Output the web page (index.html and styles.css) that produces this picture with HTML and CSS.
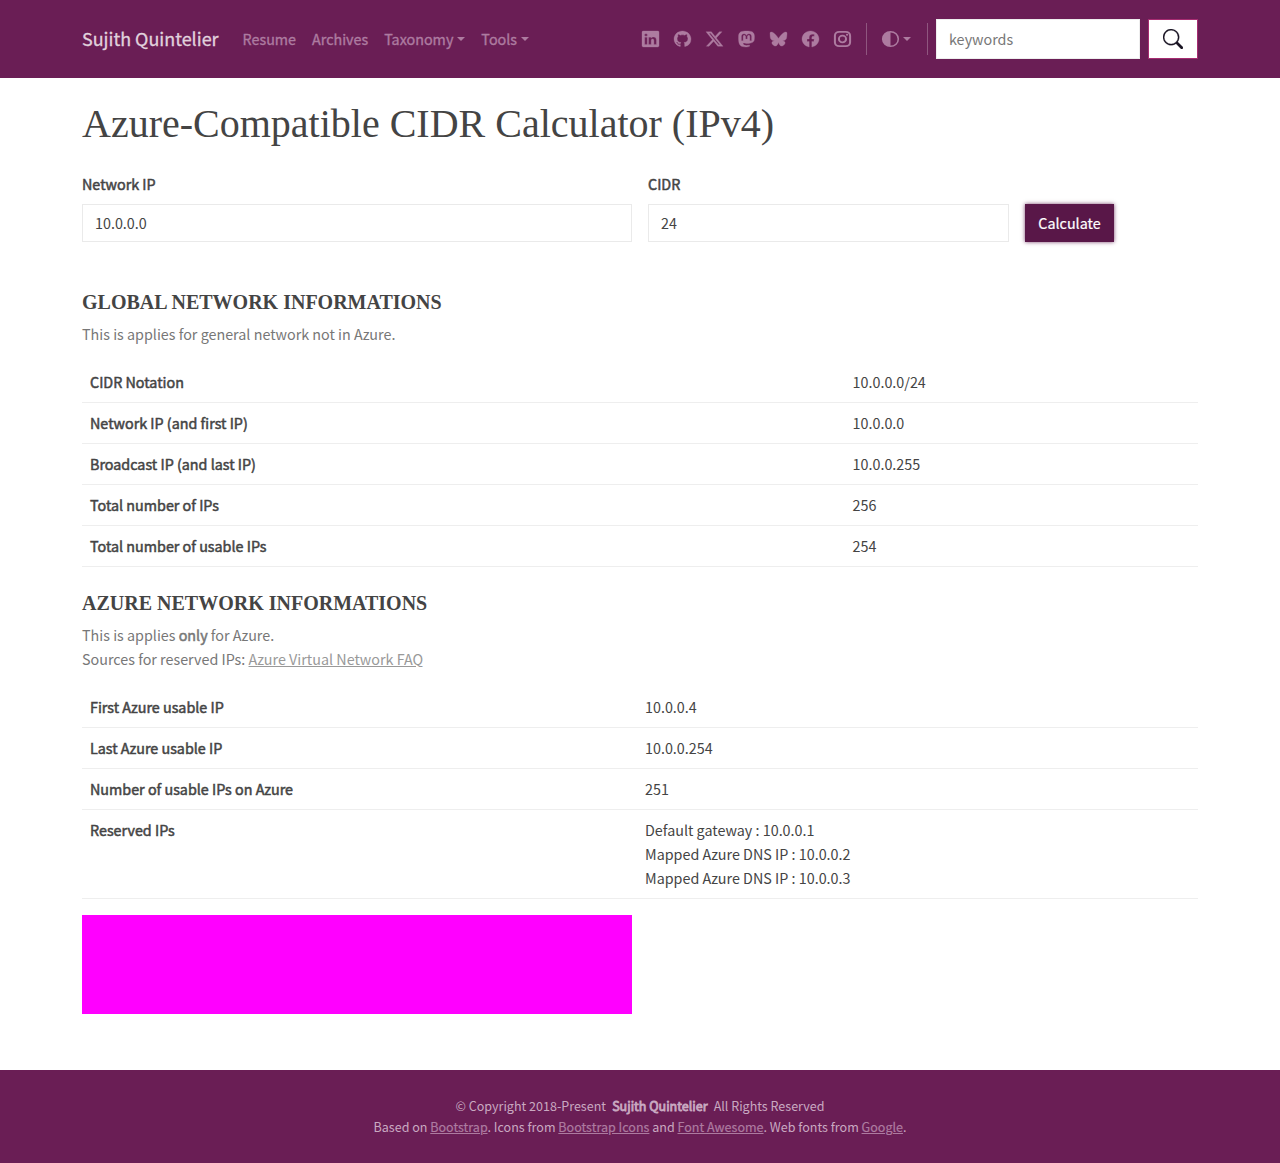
FILE: index.html
```html
<!DOCTYPE html>
<html lang="en">
<head>
<meta charset="utf-8">
<title>Azure-Compatible CIDR Calculator (IPv4)</title>
<link rel="stylesheet" href="styles.css">
</head>
<body>
<header class="navbar">
  <div class="container navbar-inner">
    <a class="brand" href="#">Sujith Quintelier</a>
    <nav class="menu">
      <a href="#">Resume</a>
      <a href="#">Archives</a>
      <a href="#" class="dropdown">Taxonomy</a>
      <a href="#" class="dropdown">Tools</a>
    </nav>
    <div class="social">
      <a href="#" aria-label="LinkedIn"><svg viewBox="0 0 16 16" preserveAspectRatio="none"><path d="M0 1.146C0 .513.526 0 1.175 0h13.65C15.474 0 16 .513 16 1.146v13.708c0 .633-.526 1.146-1.175 1.146H1.175C.526 16 0 15.487 0 14.854zm4.943 12.248V6.169H2.542v7.225zm-1.2-8.212c.837 0 1.358-.554 1.358-1.248-.015-.709-.52-1.248-1.342-1.248S2.4 3.226 2.4 3.934c0 .694.521 1.248 1.327 1.248zm4.908 8.212V9.359c0-.216.016-.432.08-.586.173-.431.568-.878 1.232-.878.869 0 1.216.662 1.216 1.634v3.865h2.401V9.25c0-2.22-1.184-3.252-2.764-3.252-1.274 0-1.845.7-2.165 1.193v.025h-.016l.016-.025V6.169h-2.4c.03.678 0 7.225 0 7.225z"/></svg></a>
      <a href="#" aria-label="GitHub"><svg viewBox="0 0 16 16" preserveAspectRatio="none"><path d="M8 0C3.58 0 0 3.58 0 8c0 3.54 2.29 6.53 5.47 7.59.4.07.55-.17.55-.38 0-.19-.01-.82-.01-1.49-2.01.37-2.53-.49-2.69-.94-.09-.23-.48-.94-.82-1.13-.28-.15-.68-.52-.01-.53.63-.01 1.08.58 1.23.82.72 1.21 1.87.87 2.33.66.07-.52.28-.87.51-1.07-1.78-.2-3.64-.89-3.64-3.95 0-.87.31-1.59.82-2.15-.08-.2-.36-1.02.08-2.12 0 0 .67-.21 2.2.82.64-.18 1.32-.27 2-.27s1.36.09 2 .27c1.53-1.04 2.2-.82 2.2-.82.44 1.1.16 1.92.08 2.12.51.56.82 1.27.82 2.15 0 3.07-1.87 3.75-3.65 3.95.29.25.54.73.54 1.48 0 1.07-.01 1.93-.01 2.2 0 .21.15.46.55.38A8.01 8.01 0 0 0 16 8c0-4.42-3.58-8-8-8"/></svg></a>
      <a href="#" aria-label="X"><svg viewBox="0 0 16 16" preserveAspectRatio="none"><path d="M12.6.75h2.454l-5.36 6.142L16 15.25h-4.937l-3.867-5.07-4.425 5.07H.316l5.733-6.57L0 .75h5.063l3.495 4.633L12.601.75Zm-.86 13.028h1.36L4.323 2.145H2.865z"/></svg></a>
      <a href="#" aria-label="Mastodon"><svg viewBox="0 0 16 16" preserveAspectRatio="none"><path d="M11.19 12.195c2.016-.24 3.77-1.475 3.99-2.603.348-1.778.32-4.339.32-4.339 0-3.47-2.286-4.488-2.286-4.488C12.062.238 10.083.017 8.027 0h-.05C5.92.017 3.942.238 2.79.765c0 0-2.285 1.017-2.285 4.488l-.002.662c-.004.64-.007 1.35.011 2.091.083 3.394.626 6.74 3.78 7.57 1.454.383 2.703.463 3.709.408 1.823-.1 2.847-.647 2.847-.647l-.06-1.317s-1.303.41-2.767.36c-1.45-.05-2.98-.156-3.215-1.928a4 4 0 0 1-.033-.496s1.424.346 3.228.428c1.103.05 2.137-.064 3.188-.189zm1.613-2.47H11.13v-4.08c0-.859-.364-1.295-1.091-1.295-.804 0-1.207.517-1.207 1.541v2.233H7.168V5.89c0-1.024-.403-1.541-1.207-1.541-.727 0-1.091.436-1.091 1.296v4.079H3.197V5.522q0-1.288.66-2.046c.456-.505 1.052-.764 1.793-.764.856 0 1.504.328 1.933.983L8 4.39l.417-.695c.429-.655 1.077-.983 1.934-.983.74 0 1.336.259 1.791.764q.662.757.661 2.046z"/></svg></a>
      <a href="#" aria-label="Bluesky"><svg viewBox="0 0 16 16" preserveAspectRatio="none"><path d="M3.468 1.948C5.303 3.325 7.276 6.118 8 7.616c.725-1.498 2.698-4.29 4.532-5.668C13.855.955 16 .186 16 2.632c0 .489-.28 4.105-.444 4.692-.572 2.04-2.653 2.561-4.504 2.246 3.236.551 4.06 2.375 2.281 4.2-3.376 3.464-4.852-.87-5.23-1.98-.07-.204-.103-.3-.103-.218 0-.081-.033.014-.102.218-.379 1.11-1.855 5.444-5.231 1.98-1.778-1.825-.955-3.65 2.28-4.2-1.85.315-3.932-.205-4.503-2.246C.28 6.737 0 3.12 0 2.632 0 .186 2.145.955 3.468 1.948"/></svg></a>
      <a href="#" aria-label="Facebook"><svg viewBox="0 0 16 16" preserveAspectRatio="none"><path d="M16 8.049c0-4.446-3.582-8.05-8-8.05C3.58 0-.002 3.603-.002 8.05c0 4.017 2.926 7.347 6.75 7.951v-5.625h-2.03V8.05H6.75V6.275c0-2.017 1.195-3.131 3.022-3.131.876 0 1.791.157 1.791.157v1.98h-1.009c-.993 0-1.303.621-1.303 1.258v1.51h2.218l-.354 2.326H9.25V16c3.824-.604 6.75-3.934 6.75-7.951"/></svg></a>
      <a href="#" aria-label="Instagram"><svg viewBox="0 0 16 16" preserveAspectRatio="none"><g fill="none" stroke="currentColor" stroke-width="1.9"><rect x=".85" y=".85" width="14.3" height="14.3" rx="4"/><circle cx="8" cy="8" r="3.35"/></g><circle cx="12.3" cy="3.7" r="1"/></svg></a>
    </div>
    <div class="theme"><a href="#" class="dropdown" aria-label="Theme"><svg viewBox="0 0 16 16" preserveAspectRatio="none"><path d="M8 14.6A6.6 6.6 0 1 0 8 1.4zm0 1.5A8.1 8.1 0 1 1 8-.1a8.1 8.1 0 0 1 0 16.2"/></svg></a></div>
    <form class="search">
      <input type="search" placeholder="keywords" aria-label="keywords">
      <button type="button" aria-label="Search"><svg viewBox="0 0 16 16"><path d="M11.742 10.344a6.5 6.5 0 1 0-1.397 1.398h-.001q.044.06.098.115l3.85 3.85a1 1 0 0 0 1.415-1.414l-3.85-3.85a1 1 0 0 0-.115-.1zM12 6.5a5.5 5.5 0 1 1-11 0 5.5 5.5 0 0 1 11 0"/></svg></button>
    </form>
  </div>
</header>
<main class="container">
  <h1>Azure-Compatible CIDR Calculator (IPv4)</h1>
  <form class="calc">
    <div class="field"><label for="ip">Network IP</label><input id="ip" type="text" value="10.0.0.0"></div>
    <div class="field"><label for="cidr">CIDR</label><input id="cidr" type="text" value="24"></div>
    <button type="button">Calculate</button>
  </form>
  <h2>GLOBAL NETWORK INFORMATIONS</h2>
  <p>This is applies for general network not in Azure.</p>
  <table class="global">
    <tr><th>CIDR Notation</th><td>10.0.0.0/24</td></tr>
    <tr><th>Network IP (and first IP)</th><td>10.0.0.0</td></tr>
    <tr><th>Broadcast IP (and last IP)</th><td>10.0.0.255</td></tr>
    <tr><th>Total number of IPs</th><td>256</td></tr>
    <tr><th>Total number of usable IPs</th><td>254</td></tr>
  </table>
  <h2>AZURE NETWORK INFORMATIONS</h2>
  <p>This is applies <b>only</b> for Azure.<br>Sources for reserved IPs: <a href="#">Azure Virtual Network FAQ</a></p>
  <table class="azure">
    <tr><th>First Azure usable IP</th><td>10.0.0.4</td></tr>
    <tr><th>Last Azure usable IP</th><td>10.0.0.254</td></tr>
    <tr><th>Number of usable IPs on Azure</th><td>251</td></tr>
    <tr><th>Reserved IPs</th><td>Default gateway : 10.0.0.1<br>Mapped Azure DNS IP : 10.0.0.2<br>Mapped Azure DNS IP : 10.0.0.3</td></tr>
  </table>
  <div class="banner"></div>
</main>
<footer>
  <div>© Copyright 2018-Present&nbsp; <b>Sujith Quintelier</b>&nbsp; All Rights Reserved</div>
  <div>Based on <a href="#">Bootstrap</a>. Icons from <a href="#">Bootstrap Icons</a> and <a href="#">Font Awesome</a>. Web fonts from <a href="#">Google</a>.</div>
</footer>
</body>
</html>
```
FILE: styles.css
```css
* { box-sizing: border-box; }
body {
  margin: 0;
  min-height: 1163px;
  display: flex;
  flex-direction: column;
  background: #fff;
  color: #444;
  font: 14.33px/24px "Noto Sans CJK JP", sans-serif;
}
.container { width: 1116px; margin: 0 auto; }
input, button { font: inherit; border-radius: 0; margin: 0; }
svg { display: block; fill: currentColor; }

.navbar { height: 78px; background: #6a1e55; color: #ad7ba0; }
.navbar a { color: inherit; text-decoration: none; }
.navbar-inner { height: 78px; display: flex; align-items: center; }
.navbar .brand {
  margin-right: 16px;
  padding-bottom: 2px;
  font-size: 17.95px;
  line-height: 30px;
  color: #e1d2dd;
  -webkit-text-stroke: .3px;
}
.menu { display: flex; flex: 1; -webkit-text-stroke: .35px; }
.menu a { padding: 8px; white-space: nowrap; }
.dropdown { display: flex; align-items: center; }
.dropdown::after {
  content: "";
  margin-left: 4px;
  border: 4px solid transparent;
  border-top-color: currentColor;
  border-bottom: 0;
}
.social { display: flex; }
.social a { width: 32px; display: flex; padding-left: 7.5px; }
.social svg, .theme svg { width: 17px; height: 16px; overflow: visible; }
.social path { stroke: currentColor; stroke-width: .3px; }
.theme {
  height: 32px;
  margin: 0 8px;
  padding: 0 16px 0 15px;
  display: flex;
  align-items: center;
  border: solid rgba(255, 255, 255, .25);
  border-width: 0 1px;
}
.search { display: flex; align-items: center; gap: 8px; }
.search input { width: 204px; height: 40px; padding: 0 12px 2px; border: 1px solid #eee; background: #fff; }
.search input::placeholder { color: #777; opacity: 1; }
.search button {
  width: 50px;
  height: 40px;
  padding: 0;
  display: flex;
  align-items: center;
  justify-content: center;
  border: 1px solid #a62c71;
  background: #fff;
  color: #1a1423;
}
.search svg { width: 20px; height: 20px; }
.search path { stroke: currentColor; stroke-width: .2px; }

h1 { margin: 22px 0 24px; font: 400 40px/48px "Liberation Serif", serif; }
.calc { display: grid; grid-template-columns: 550px 361px 89px; gap: 16px; align-items: end; margin-bottom: 48px; }
label, th, b { font-weight: 400; -webkit-text-stroke: .5px; }
label { display: block; margin-bottom: 8px; }
.field input {
  display: block;
  width: 100%;
  height: 38px;
  padding: 0 12px 2px;
  border: 1px solid #eaeaea;
  background: #fff;
  color: #444;
}
.calc button {
  height: 38px;
  padding: 0;
  border: 0;
  background: #591748;
  color: #fff;
  box-shadow: 0 0 4px rgba(89, 23, 72, .8);
  -webkit-text-stroke: .2px;
}
h2 { margin: 0 0 8px; font: 700 20px/24px "Liberation Serif", serif; }
p { margin: 0 0 16px; color: #777; }
p a { color: #999; }
table { width: 100%; margin-bottom: 24px; border-collapse: collapse; table-layout: fixed; }
th, td { padding: 8px; border-bottom: 1px solid #eee; text-align: left; vertical-align: top; }
.global th { width: 762.6px; }
.azure th { width: 555px; }
.azure { margin-bottom: 16px; }
.banner { width: 550px; height: 99px; background: #f0f; }

footer {
  height: 93px;
  margin-top: auto;
  padding-top: 25px;
  background: #6a1e55;
  color: #c9a9c1;
  font-size: 12.54px;
  line-height: 21px;
  text-align: center;
}
footer b { margin: 0 .5px; -webkit-text-stroke: .8px; }
footer a { color: #ad7ba0; -webkit-text-stroke: .2px; }
```
